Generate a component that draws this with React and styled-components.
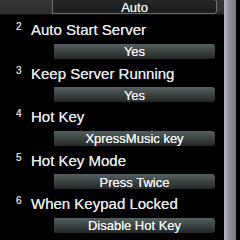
import React from 'react';
import styled, { createGlobalStyle } from 'styled-components';

const GlobalStyle = createGlobalStyle`
    html, body {
        margin: 0;
        padding: 0;
        background: #000;
    }
`;

const Screen = styled.div`
    width: 240px;
    height: 240px;
    display: flex;
    overflow: hidden;
    background: #000;
    font-family: "Liberation Sans", Arial, sans-serif;
`;

const List = styled.div`
    width: 224px;
    display: flex;
    flex-direction: column;
    margin-top: -1px;
`;

const Focused = styled.div`
    height: 15px;
    display: flex;
    align-items: stretch;
    background: linear-gradient(#353838, #2a2c2c);
    border-bottom: 1px solid #101111;
`;

const Label = styled.div`
    height: 28.5px;
    display: flex;
    align-items: baseline;
    padding-top: 6px;
    box-sizing: border-box;
    color: #e6e8e8;
    font-size: 15px;
    text-shadow: 0 0 0.3px #e6e8e8;
`;

const Num = styled.span`
    width: 15px;
    padding-left: 16px;
    font-size: 10px;
    position: relative;
    top: -5px;
    color: #d8dada;
`;

const ValueRow = styled.div`
    height: 15px;
    display: flex;
`;

const Value = styled.div`
    margin-left: ${p => p.focused ? 52 : 54}px;
    width: ${p => p.focused ? 165 : 161}px;
    box-sizing: border-box;
    display: flex;
    align-items: center;
    justify-content: center;
    color: #f2f2f2;
    font-size: 13px;
    line-height: 15px;
    padding-top: 1px;
    text-shadow: 0 0 0.3px #f2f2f2;
    border-radius: 0 3px 3px 0;
    background: ${p => p.focused
        ? 'linear-gradient(#262828, #1a1c1c)'
        : 'linear-gradient(#566060, #3c4242 50%, #252828)'};
    border: ${p => p.focused ? '1px solid #6e7272' : 'none'};
`;

const Scrollbar = styled.div`
    width: 12px;
    height: 240px;
    background: linear-gradient(90deg, #b8babf, #8e9096 40%, #7a7c82);
`;

const rows = [
    { n: 2, label: 'Auto Start Server', value: 'Yes' },
    { n: 3, label: 'Keep Server Running', value: 'Yes' },
    { n: 4, label: 'Hot Key', value: 'XpressMusic key' },
    { n: 5, label: 'Hot Key Mode', value: 'Press Twice' },
    { n: 6, label: 'When Keypad Locked', value: 'Disable Hot Key' },
];

const App = () => (
    <>
        <GlobalStyle />
        <Screen>
            <List>
                <Focused>
                    <Value focused>Auto</Value>
                </Focused>
                {rows.map(r => (
                    <div key={r.n}>
                        <Label>
                            <Num>{r.n}</Num>
                            {r.label}
                        </Label>
                        <ValueRow>
                            <Value>{r.value}</Value>
                        </ValueRow>
                    </div>
                ))}
            </List>
            <Scrollbar />
        </Screen>
    </>
);

export default App;
